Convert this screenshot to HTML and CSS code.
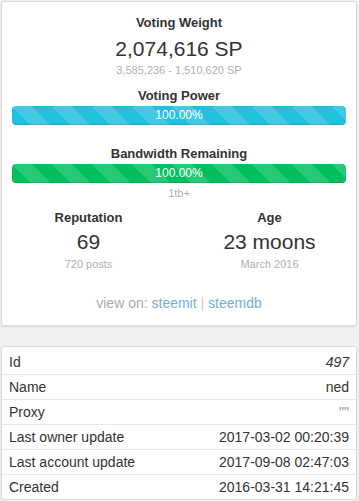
FILE: index.html
```html
<!DOCTYPE html>
<html>

<head>
	<title>ned - account</title>
	<link rel="stylesheet" href="styles.css">
</head>

<body>

	<div class="card stats">
		<div class="block weight">
			<div class="stat-title">Voting Weight</div>
			<div class="stat-value">2,074,616 SP</div>
			<div class="stat-sub">3,585,236 - 1,510,620 SP</div>
		</div>

		<div class="block power">
			<div class="stat-title">Voting Power</div>
			<div class="progress">
				<div class="progress-bar bar-info" style="width: 100%">100.00%</div>
			</div>
		</div>

		<div class="block bandwidth">
			<div class="stat-title">Bandwidth Remaining</div>
			<div class="progress">
				<div class="progress-bar bar-success" style="width: 100%">100.00%</div>
			</div>
			<div class="stat-sub">1tb+</div>
		</div>

		<div class="split">
			<div class="col">
				<div class="stat-title">Reputation</div>
				<div class="stat-value">69</div>
				<div class="stat-sub">720 posts</div>
			</div>
			<div class="col">
				<div class="stat-title">Age</div>
				<div class="stat-value">23 moons</div>
				<div class="stat-sub">March 2016</div>
			</div>
		</div>

		<div class="view-on">
			view on: <a href="#">steemit</a> <span class="sep">|</span> <a href="#">steemdb</a>
		</div>
	</div>

	<div class="card props">
		<table class="props-table">
			<tr><td>Id</td><td class="val"><i>497</i></td></tr>
			<tr><td>Name</td><td class="val">ned</td></tr>
			<tr><td>Proxy</td><td class="val"><span class="empty">""</span></td></tr>
			<tr><td>Last owner update</td><td class="val">2017-03-02 00:20:39</td></tr>
			<tr><td>Last account update</td><td class="val">2017-09-08 02:47:03</td></tr>
			<tr><td>Created</td><td class="val">2016-03-31 14:21:45</td></tr>
		</table>
	</div>

</body>

</html>
```

FILE: styles.css
```css
body {
	margin: 0;
	padding: 1px 2px 0 1px;
	background-color: #f0f0f0;
	font-family: "Liberation Sans", Arial, sans-serif;
	color: #333;
}

.card {
	background-color: #fff;
	border: 1px solid #dcdcdc;
	border-radius: 3px;
	box-shadow: 0 1px 2px rgba(0, 0, 0, 0.08);
}

.stats {
	padding: 12px 10px 12px;
	text-align: center;
}

.stat-title {
	font-size: 13px;
	font-weight: bold;
	line-height: 18px;
}

.stat-value {
	font-size: 21px;
	line-height: 26px;
}

.stat-sub {
	font-size: 11px;
	line-height: 14px;
	color: #b0b0b0;
}

.weight .stat-value {
	margin-top: 4px;
}

.weight .stat-sub {
	margin-top: 1px;
}

.power {
	margin-top: 10px;
}

.bandwidth {
	margin-top: 20px;
}

.power .stat-title,
.bandwidth .stat-title {
	margin-bottom: 1px;
}

.bandwidth .stat-sub {
	margin-top: 3px;
}

.progress {
	height: 19px;
	border-radius: 4px;
	overflow: hidden;
	background-color: #f5f5f5;
}

.progress-bar {
	height: 100%;
	line-height: 19px;
	font-size: 12px;
	color: #fff;
	text-align: center;
	box-shadow: inset 0 -1px 0 rgba(0, 0, 0, 0.12);
	background-image: linear-gradient(45deg, rgba(255, 255, 255, .15) 25%, transparent 25%, transparent 50%, rgba(255, 255, 255, .15) 50%, rgba(255, 255, 255, .15) 75%, transparent 75%, transparent);
	background-size: 40px 40px;
}

.bar-info {
	background-color: #22c0df;
}

.bar-success {
	background-color: #00bf5c;
}

.split {
	display: grid;
	grid-template-columns: 1fr 1fr;
	margin: 9px -14px 0;
}

.split .stat-value {
	margin-top: 2px;
}

.split .stat-sub {
	margin-top: 2px;
}

.view-on {
	margin-top: 22px;
	font-size: 14px;
	line-height: 20px;
	color: #aaa;
}

.view-on a {
	color: #74afd9;
	text-decoration: none;
}

.view-on .sep {
	color: #ccc;
}

.props {
	margin-top: 20px;
	padding-top: 3px;
}

.props-table {
	width: 100%;
	border-collapse: collapse;
	font-size: 14px;
}

.props-table td {
	padding: 2px 7px;
	line-height: 20px;
	border-top: 1px solid #e8e8e8;
}

.props-table tr:first-child td {
	border-top: none;
}

.props-table .val {
	text-align: right;
}

.empty {
	color: #8a9bb0;
}
```
